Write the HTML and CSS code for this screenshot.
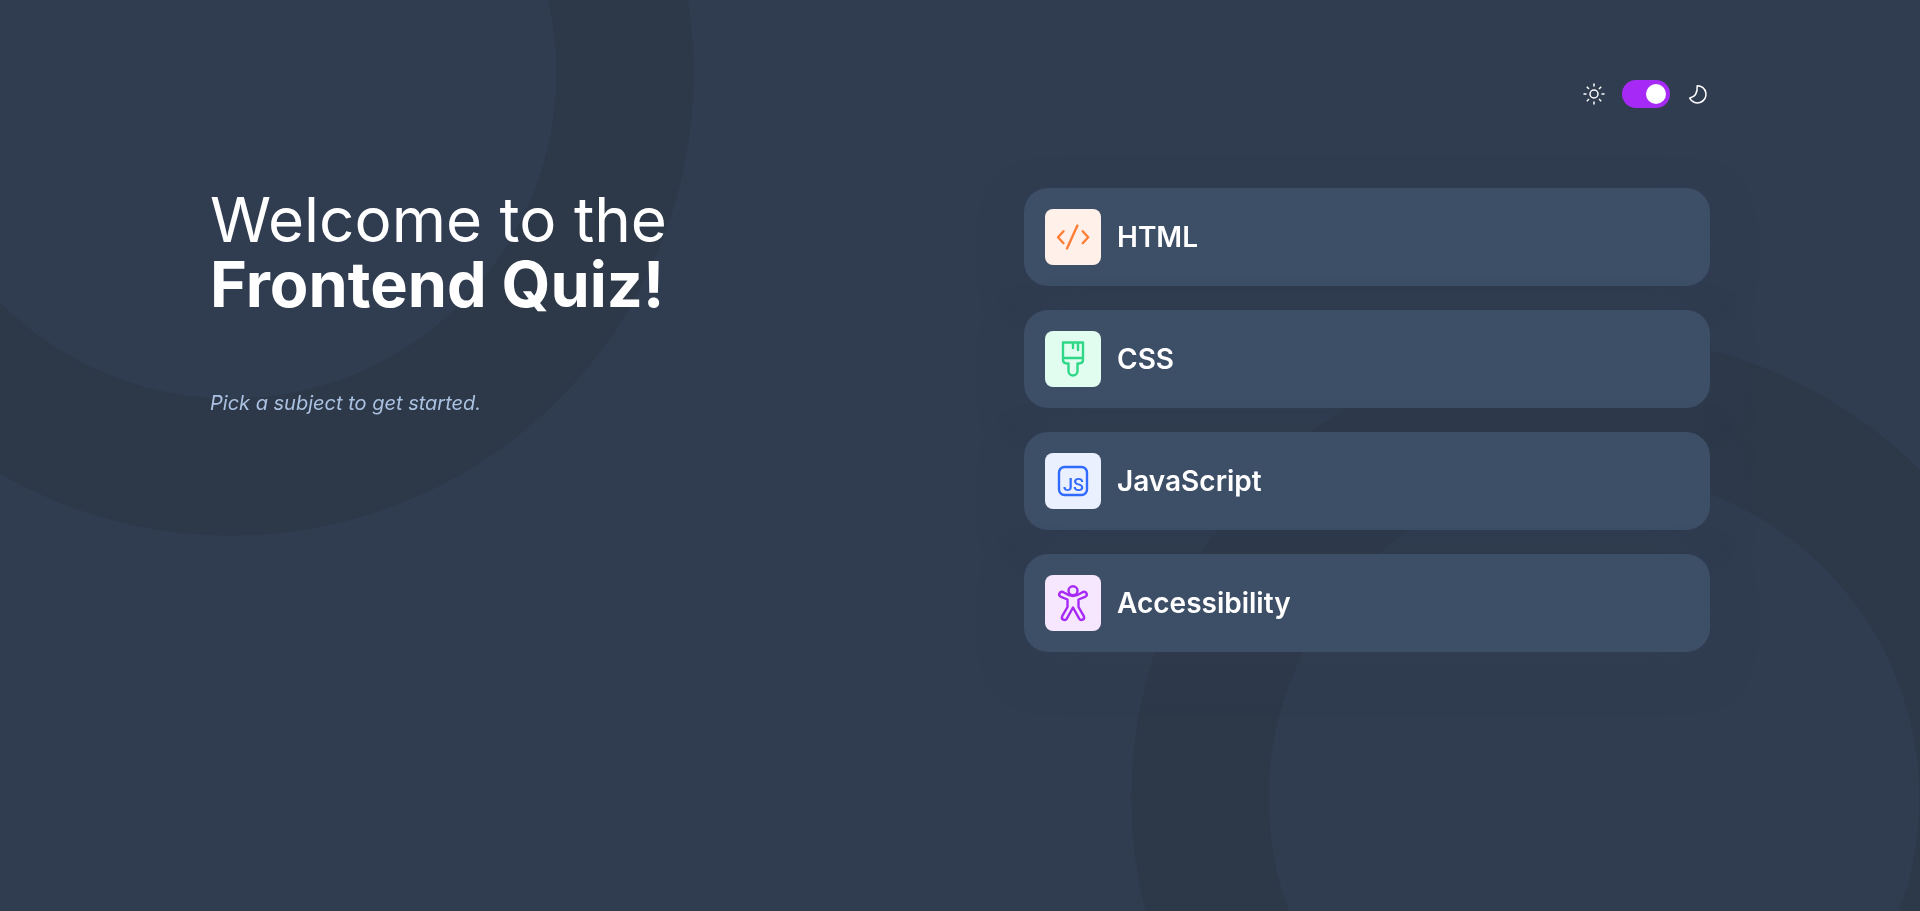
FILE: index.html
```html
<!DOCTYPE html>
<html lang="en">
<head>
  <meta charset="utf-8">
  <meta name="viewport" content="width=device-width, initial-scale=1">
  <title>Frontend Quiz</title>
  <link rel="stylesheet" href="styles.css">
</head>
<body>
  <svg class="rings" aria-hidden="true">
    <circle class="ring" cx="231" cy="73" r="394"/>
    <circle class="ring" cx="1594" cy="798" r="394"/>
  </svg>
  <div class="page">
    <header class="header">
      <label class="theme">
        <svg class="theme-icon" viewBox="0 0 24 24" aria-hidden="true">
          <circle cx="12" cy="12" r="4"/>
          <path d="M12 1.500v3M12 19.500v3M1.500 12h3M19.500 12h3M4.800 4.800l2.200 2.200M17 17l2.200 2.200M4.800 19.200L7 17M17 7l2.200-2.200"/>
        </svg>
        <input class="switch" type="checkbox" role="switch" aria-label="Dark mode" checked>
        <svg class="theme-icon" viewBox="0 0 24 24" aria-hidden="true">
          <path d="M11.200 3.700a8.600 8.600 0 1 1-7.500 12.400c4.500-1 8-4.500 7.500-12.400z"/>
        </svg>
      </label>
    </header>
    <main class="main">
      <section class="intro">
        <h1 class="title">Welcome to the <strong class="title-strong">Frontend Quiz!</strong></h1>
        <p class="hint">Pick a subject to get started.</p>
      </section>
      <div class="subjects">
        <button class="subject" type="button">
          <svg class="tile tile-html" viewBox="0 0 56 56" aria-hidden="true">
            <path d="M18.500 22.200l-5.500 6 5.500 6M32.400 16.500L22 39.500M37.700 22.200l5.500 6-5.500 6"/>
          </svg>
          HTML
        </button>
        <button class="subject" type="button">
          <svg class="tile tile-css" viewBox="0 0 56 56" aria-hidden="true">
            <path d="M18 11.500h20v17c0 2.500-1.500 4-4 4h-1.500v7.500a4.500 4.500 0 0 1-9 0v-7.500H22c-2.500 0-4-1.500-4-4zM18 27h20M28 12v5M33 12v7"/>
          </svg>
          CSS
        </button>
        <button class="subject" type="button">
          <svg class="tile tile-js" viewBox="0 0 56 56" aria-hidden="true">
            <rect x="14" y="14" width="28" height="28" rx="5.500"/>
            <text class="js-text" x="39" y="38" text-anchor="end">JS</text>
          </svg>
          JavaScript
        </button>
        <button class="subject" type="button">
          <svg class="tile tile-a11y" viewBox="0 0 56 56" aria-hidden="true">
            <circle cx="28" cy="15.800" r="4.500"/>
            <path d="M24 20.200l-6-3.200c-3.700-1.300-5.200 3.700-2 4.900l6.500 2.600v7.500l-5.300 9.200c-1.500 3.300 3 5.100 4.600 2.400L28 32.500l6.200 11.100c1.600 2.700 6.100.900 4.600-2.400L33.500 32v-7.500l6.500-2.600c3.200-1.200 1.700-6.200-2-4.900l-6 3.200c-2.700 1-5.300 1-8 0z"/>
          </svg>
          Accessibility
        </button>
      </div>
    </main>
  </div>
</body>
</html>
```
FILE: styles.css
```css
* {
  box-sizing: border-box;
}

body {
  margin: 0;
  min-height: 100vh;
  background: #303c50;
  color: #fff;
  font-family: Inter, "Noto Sans", sans-serif;
}

.rings {
  position: fixed;
  inset: 0;
  z-index: -1;
  width: 100%;
  height: 100%;
}

.ring {
  fill: none;
  stroke: #2d3949;
  stroke-width: 137px;
}

.page {
  max-width: 1548px;
  margin: 0 auto;
  padding: 80px 24px;
}

.header {
  display: flex;
  justify-content: flex-end;
  margin-bottom: 80px;
}

.theme {
  display: flex;
  align-items: center;
  gap: 16px;
}

.theme-icon {
  width: 24px;
  height: 24px;
  fill: none;
  stroke: #fff;
  stroke-width: 1.5px;
  stroke-linejoin: round;
}

.switch {
  display: flex;
  align-items: center;
  justify-content: flex-end;
  appearance: none;
  width: 48px;
  height: 28px;
  margin: 0;
  padding: 4px;
  border-radius: 14px;
  background: #a729f5;
  cursor: pointer;
}

.switch::before {
  content: "";
  width: 20px;
  height: 20px;
  border-radius: 50%;
  background: #fff;
}

.switch:not(:checked) {
  justify-content: flex-start;
}

.main {
  display: grid;
  grid-template-columns: 1fr 1fr;
  gap: 128px;
}

.title {
  margin: 0 0 72px;
  font-size: 62px;
  font-weight: 400;
  line-height: 64px;
}

.title-strong {
  display: block;
  font-size: 63px;
  font-weight: 700;
}

.hint {
  margin: 0;
  color: #abc1e1;
  font-size: 20px;
  font-style: italic;
  line-height: 30px;
}

.subjects {
  display: flex;
  flex-direction: column;
  gap: 24px;
}

.subject {
  display: flex;
  align-items: center;
  gap: 16px;
  padding: 21px;
  border: 0;
  border-radius: 24px;
  background: #3d4e67;
  box-shadow: 0 16px 40px rgba(49, 62, 81, 0.5);
  color: #fff;
  font: 600 28px/28px Inter, "Noto Sans", sans-serif;
  text-align: left;
  cursor: pointer;
}

.tile {
  width: 56px;
  height: 56px;
  border-radius: 8px;
  fill: none;
  stroke-width: 2.4px;
  stroke-linecap: round;
  stroke-linejoin: round;
}

.tile-html {
  background: #fff1e9;
  stroke: #ff7e35;
}

.tile-css {
  background: #e0fdef;
  stroke: #2fd887;
}

.tile-js {
  background: #ebf0ff;
  stroke: #306aff;
}

.tile-a11y {
  background: #f6e7ff;
  stroke: #a729f5;
}

.js-text {
  fill: #306aff;
  stroke: none;
  font: 500 18px Roboto, sans-serif;
}

@media (max-width: 900px) {
  .main {
    grid-template-columns: 1fr;
    gap: 64px;
  }
}
```
